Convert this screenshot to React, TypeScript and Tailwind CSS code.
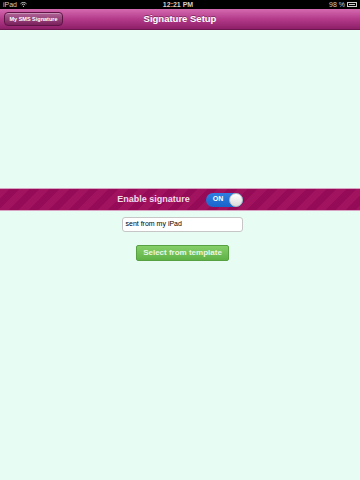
export default function App() {
  return (
    <div
      className="w-[360px] h-[480px] overflow-hidden flex flex-col bg-[#e7fdf4]"
      style={{ fontFamily: '"Liberation Sans", Arial, sans-serif' }}
    >
      {/* status bar */}
      <div className="h-[9px] bg-black flex items-center justify-between px-[3px] text-[7px] leading-none text-[#cfcfcf]">
        <div className="flex items-center gap-[3px]">
          <span>iPad</span>
          <svg width="7" height="5" viewBox="0 0 7 5">
            <path d="M0.5 1.8 A4 4 0 0 1 6.5 1.8" stroke="#cfcfcf" strokeWidth="0.9" fill="none" />
            <path d="M1.8 3 A2.3 2.3 0 0 1 5.2 3" stroke="#cfcfcf" strokeWidth="0.9" fill="none" />
            <circle cx="3.5" cy="4.3" r="0.6" fill="#cfcfcf" />
          </svg>
        </div>
        <span className="font-bold">12:21 PM</span>
        <div className="flex items-center gap-[2px]">
          <span>98 %</span>
          <div className="w-[10px] h-[5px] border border-[#cfcfcf] p-[1px]">
            <div className="w-full h-full bg-[#cfcfcf]" />
          </div>
        </div>
      </div>

      {/* nav bar */}
      <div className="h-[21px] relative flex items-center justify-center bg-gradient-to-b from-[#d46ab0] via-[#b43a8a] to-[#8e1f69] border-b border-[#6d1650]">
        <div className="absolute left-[4px] top-[3px] h-[14px] w-[59px] flex items-center justify-center rounded-[4px] bg-gradient-to-b from-[#b06497] to-[#7a1f5c] border border-[#5f1446] text-[5.5px] font-bold text-white shadow-[inset_0_1px_0_rgba(255,255,255,0.3)]">
          My SMS Signature
        </div>
        <span className="text-[9.5px] font-bold text-white [text-shadow:0_-1px_0_rgba(0,0,0,0.35)]">
          Signature Setup
        </span>
      </div>

      <div className="h-[158px]" />

      {/* stripe band */}
      <div className="h-[23px] flex items-center justify-center gap-[16px] bg-[#a0105e] bg-[repeating-linear-gradient(135deg,#a1125f_0px,#a1125f_7px,#960b57_7px,#960b57_14px)] border-y border-[#d7a3c3]">
        <span className="text-[9px] font-bold text-[#f3dcea]">Enable signature</span>
        <div className="w-[37px] h-[14px] rounded-full bg-gradient-to-b from-[#2f7fe0] to-[#1a64cc] flex items-center justify-between pl-[7px]">
          <span className="text-[7px] font-bold text-white">ON</span>
          <div className="w-[14px] h-[14px] rounded-full bg-gradient-to-b from-white to-[#dcdcdc] border border-[#b9b9b9]" />
        </div>
      </div>

      {/* input */}
      <div className="flex justify-center mt-[6px] pl-[4px]">
        <div className="w-[121px] h-[15px] bg-white border border-[#c6c6c6] rounded-[3px] flex items-center px-[3px] text-[7px] text-black">
          sent from my iPad
        </div>
      </div>

      {/* button */}
      <div className="flex justify-center mt-[13px] pl-[5px]">
        <div className="w-[93px] h-[16px] rounded-[2px] bg-gradient-to-b from-[#86cf6a] to-[#5fb246] border border-[#58a142] flex items-center justify-center text-[8px] font-bold text-[#eaf7e3]">
          Select from template
        </div>
      </div>
    </div>
  );
}
